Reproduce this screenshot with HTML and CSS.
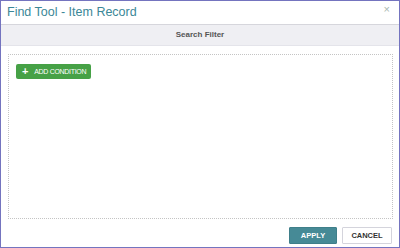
FILE: index.html
```html
<!DOCTYPE html>
<html lang="en">
<head>
    <meta charset="UTF-8">
    <title>Find Tool - Item Record</title>
    <link rel="stylesheet" href="styles.css">
</head>
<body>
    <div class="dialog">
        <div class="dialog-header">
            <span class="dialog-title">Find Tool - Item Record</span>
            <span class="close">&times;</span>
        </div>
        <div class="filter-band">Search Filter</div>
        <div class="dialog-body">
            <div class="filter-box">
                <button class="btn-add"><span class="plus">+</span>ADD CONDITION</button>
            </div>
        </div>
        <div class="dialog-footer">
            <button class="btn btn-apply">APPLY</button>
            <button class="btn btn-cancel">CANCEL</button>
        </div>
    </div>
</body>
</html>
```

FILE: styles.css
```css
html, body {
    margin: 0;
    padding: 0;
}

body {
    font-family: 'Liberation Sans', Arial, sans-serif;
    background-color: white;
}

.dialog {
    box-sizing: border-box;
    width: 400px;
    height: 248px;
    border: 1px solid #7474bf;
    display: flex;
    flex-direction: column;
    background: white;
}

.dialog-header {
    height: 23px;
    display: flex;
    align-items: center;
    justify-content: space-between;
    padding: 0 9px 0 6px;
    border-bottom: 1px solid #d6d6dc;
}

.dialog-title {
    color: #3b8797;
    font-size: 12.5px;
    margin-top: -1px;
}

.close {
    color: #a8b8b0;
    font-size: 11px;
    margin-top: -8px;
}

.filter-band {
    height: 20px;
    line-height: 20px;
    background: #efeff3;
    border-bottom: 1px solid #e4e4ea;
    text-align: center;
    font-size: 8px;
    font-weight: bold;
    color: #555;
}

.dialog-body {
    padding: 8px 6px 0 7px;
}

.filter-box {
    height: 165px;
    border: 1px dotted #c4c4c4;
    padding: 9px 7px;
    box-sizing: border-box;
}

.btn-add {
    display: flex;
    align-items: center;
    height: 15px;
    padding: 0 5px 0 6px;
    background: #46a146;
    color: white;
    border: none;
    border-radius: 2px;
    font-family: inherit;
    font-size: 7px;
    letter-spacing: -0.3px;
    cursor: pointer;
}

.plus {
    font-size: 11px;
    font-weight: bold;
    margin-right: 6px;
    line-height: 1;
}

.dialog-footer {
    display: flex;
    justify-content: flex-end;
    gap: 5px;
    padding: 8px 7px 0 0;
}

.btn {
    height: 17px;
    font-family: inherit;
    font-size: 7.5px;
    font-weight: bold;
    border-radius: 1px;
    cursor: pointer;
}

.btn-apply {
    width: 48px;
    background: #468a96;
    color: white;
    border: 1px solid #3f7f8a;
}

.btn-cancel {
    width: 50px;
    background: white;
    color: #333;
    border: 1px solid #d4d4dc;
}
```
